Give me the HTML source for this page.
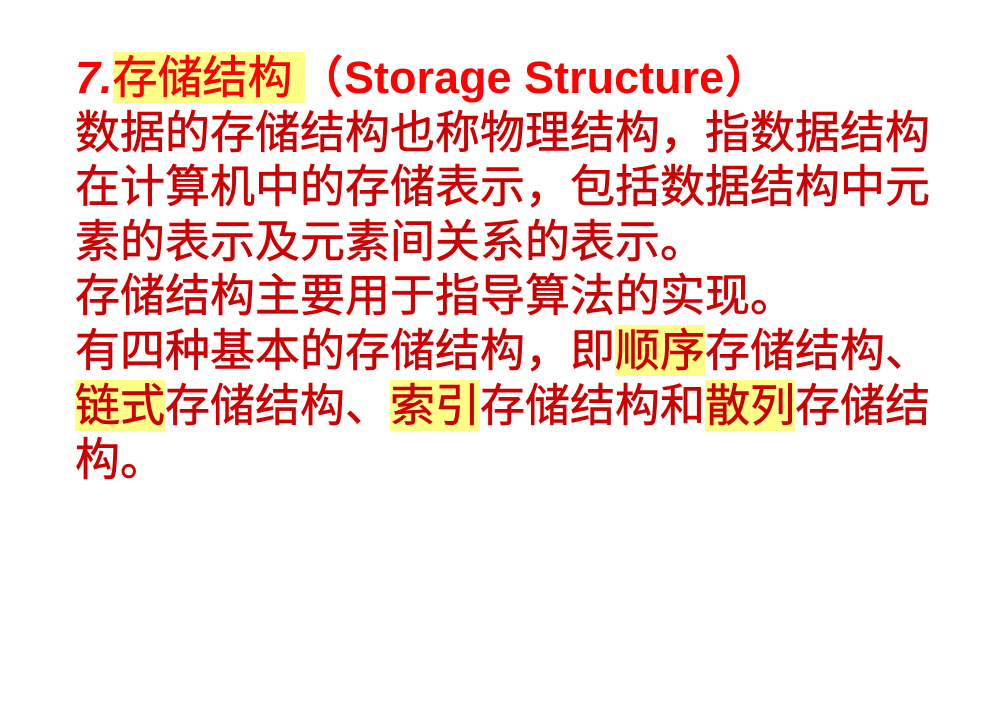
<!DOCTYPE html>
<html><head><meta charset="utf-8"><style>
html,body{margin:0;padding:0;background:#fff;width:989px;height:708px;overflow:hidden}
#t{position:absolute;left:75px;top:51px;width:900px;font-family:"Liberation Sans","Noto Sans CJK SC",sans-serif;font-size:45px;line-height:54.6px;color:#cc0000;white-space:nowrap;letter-spacing:0;font-weight:400;-webkit-text-stroke:0.6px #cc0000}
.h{background:#ffff88}
.ti{color:#ff0000;font-size:45px;-webkit-text-stroke:0.6px #ff0000}
.ti b{font-weight:bold;-webkit-text-stroke:0}
.ti .l{font-size:45px}
</style></head><body>
<div id="t">
<div class="ti"><b class="l"><i>7.</i></b><span class="h">存储结构 </span><b class="l" style="margin-left:-6px">（Storage Structure）</b></div>
<div>数据的存储结构也称物理结构，指数据结构</div>
<div>在计算机中的存储表示，包括数据结构中元</div>
<div>素的表示及元素间关系的表示。</div>
<div>存储结构主要用于指导算法的实现。</div>
<div>有四种基本的存储结构，即<span class="h">顺序</span>存储结构、</div>
<div><span class="h">链式</span>存储结构、<span class="h">索引</span>存储结构和<span class="h">散列</span>存储结</div>
<div>构。</div>
</div>
</body></html>
